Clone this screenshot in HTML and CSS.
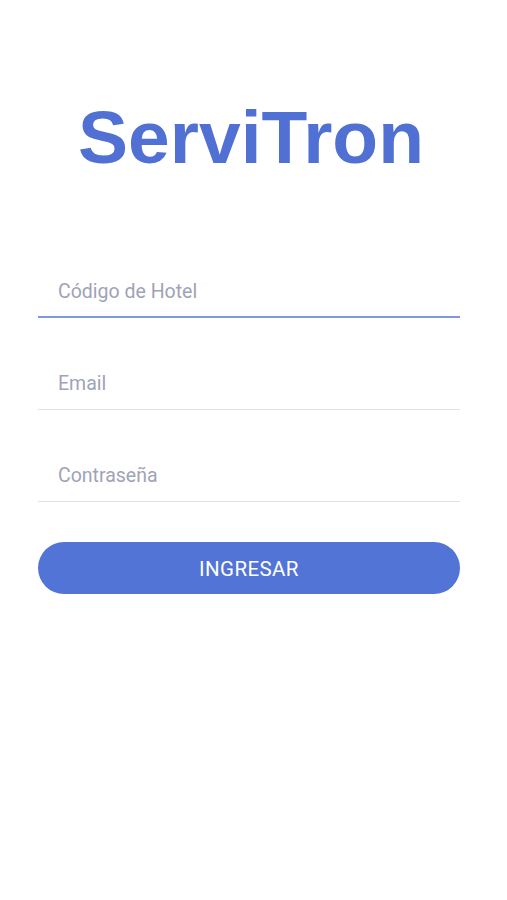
FILE: index.html
```html
<!DOCTYPE html>
<html lang="es">
    <head>
        <meta charset="UTF-8">
        <meta name="viewport" content="width=device-width, initial-scale=1.0">
        <title>ServiTron - Ingresar</title>

        <link rel="stylesheet" href="styles.css">
</head>

<body>

    <div id="pantalla">
        <div class="logo">
            <h1 id="Titulo">ServiTron</h1>
        </div>

        <form id="formLogin" onsubmit="return false;">
            <div class="campo">
                <input type="text" id="codigo" class="activo" placeholder="Código de Hotel">
            </div>

            <div class="campo">
                <input type="email" id="email" placeholder="Email">
            </div>

            <div class="campo">
                <input type="password" id="clave" placeholder="Contraseña">
            </div>

            <button type="submit" class="boton">Ingresar</button>
        </form>
    </div>

</body>

</html>
```

FILE: styles.css
```css
* {
    margin: 0;
    padding: 0;
    box-sizing: border-box;
}

body {
    font-family: Roboto, "Liberation Sans", Arial, sans-serif;
    background-color: #fff;
    color: #333;
}

#pantalla {
    width: 507px;
    padding-top: 100px;
}

.logo {
    padding-left: 78px;
}

h1 {
    font-family: "Liberation Sans", Arial, sans-serif;
    font-weight: bold;
    font-size: 75px;
    line-height: 75px;
    color: #5170d3;
}

form {
    display: flex;
    flex-direction: column;
    gap: 46px;
    width: 422px;
    margin-left: 38px;
    margin-top: 97px;
}

.campo input {
    display: block;
    width: 100%;
    height: 46px;
    padding: 8px 20px 15px;
    font-family: Roboto, "Liberation Sans", sans-serif;
    font-size: 19.5px;
    line-height: 22px;
    color: #444;
    border: none;
    border-bottom: 1px solid #e2e2e6;
    outline: none;
    background: transparent;
}

.campo input.activo {
    border-bottom: 2px solid #7f97e0;
    padding-bottom: 14px;
}

.campo input::placeholder {
    color: #9fa3b7;
}

.boton {
    margin-top: -6px;
    height: 52px;
    padding-top: 2px;
    line-height: 50px;
    border: none;
    border-radius: 26px;
    background-color: #5274d6;
    color: #fff;
    font-family: Roboto, "Liberation Sans", sans-serif;
    font-size: 20.5px;
    letter-spacing: 0.4px;
    text-transform: uppercase;
    cursor: pointer;
}
```
